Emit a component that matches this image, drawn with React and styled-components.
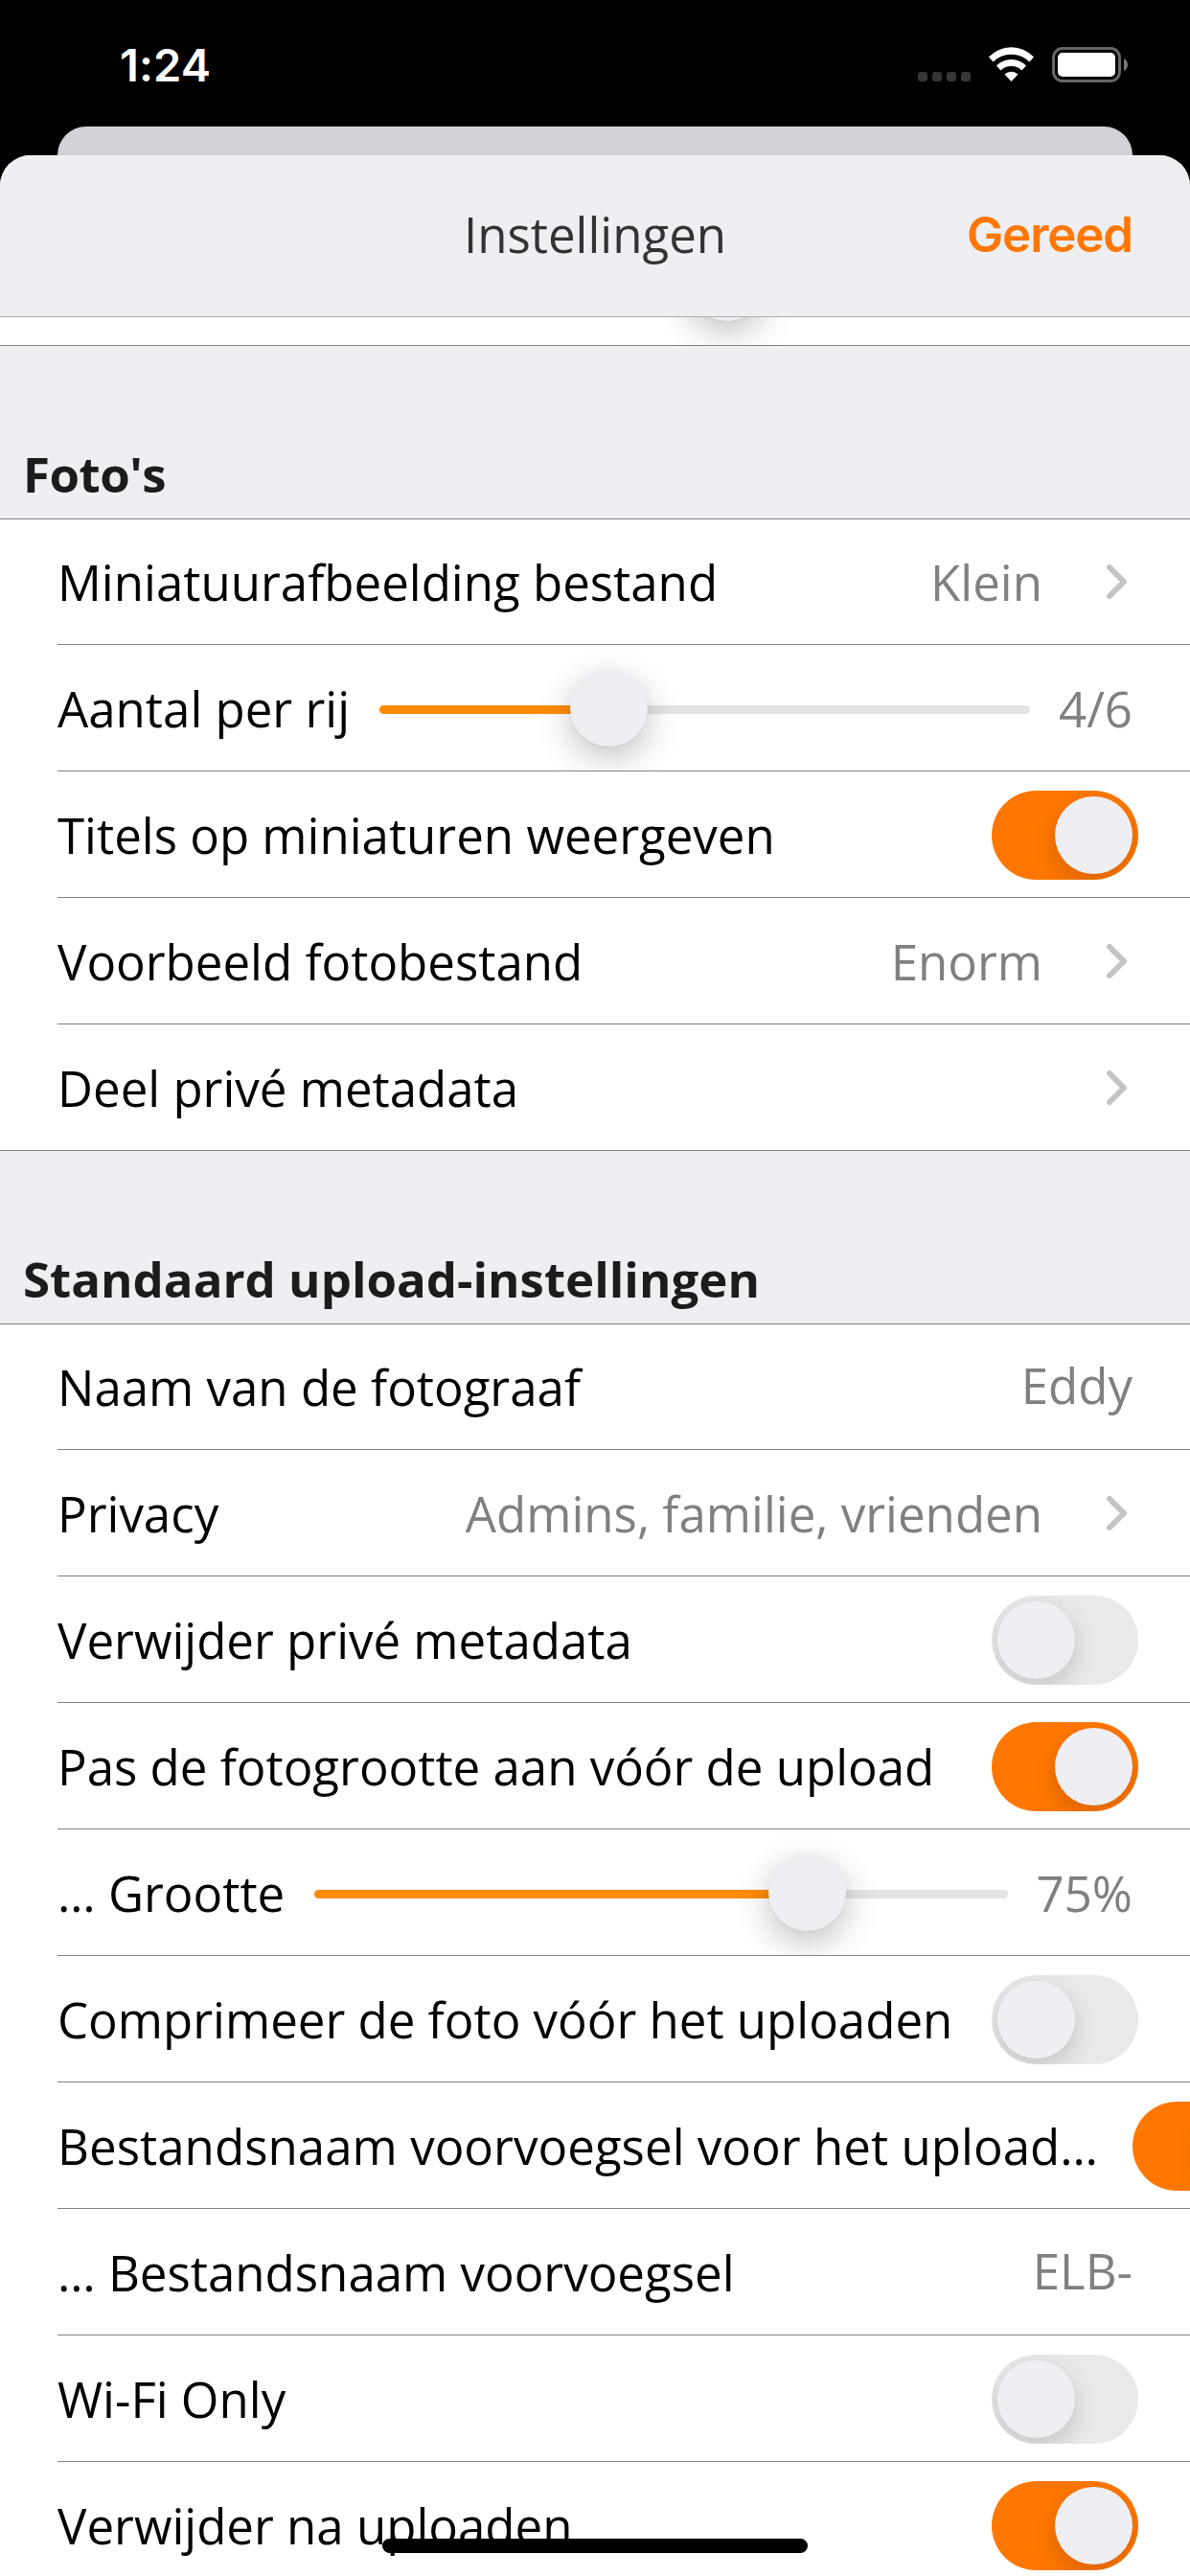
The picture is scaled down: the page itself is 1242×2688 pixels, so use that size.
import React from "react";
import styled, { createGlobalStyle } from "styled-components";

const GlobalStyle = createGlobalStyle`
  * { box-sizing: border-box; }
  body { margin: 0; background: #000; overflow: hidden; }
`;

const Screen = styled.div`
  position: relative;
  width: 1242px;
  height: 2688px;
  overflow: hidden;
  display: flex;
  flex-direction: column;
  background: #000;
  font-family: "Open Sans", "Noto Sans", sans-serif;
  font-size: 51px;
  line-height: 70px;
  white-space: nowrap;
`;

const StatusBar = styled.header`
  flex: none;
  height: 132px;
  padding: 0 64px 0 125px;
  display: flex;
  justify-content: space-between;
`;

const Clock = styled.time`
  margin-top: 33px;
  color: #fff;
  font: 600 47px/70px Inter, sans-serif;
  letter-spacing: 0.1px;
`;

const StatusIcons = styled.svg`
  width: 221px;
  height: 44px;
  margin-top: 49px;
`;

const BackCard = styled.div`
  flex: none;
  height: 30px;
  margin: 0 60px;
  border-radius: 30px 30px 0 0;
  background: #d2d1d6;
`;

const Sheet = styled.main`
  flex: none;
  height: 2526px;
  overflow: hidden;
  border-radius: 32px 32px 0 0;
  background: #efeef3;
`;

const NavBar = styled.nav`
  position: relative;
  z-index: 1;
  height: 169px;
  padding: 0 60px;
  display: grid;
  grid-template-columns: 1fr auto 1fr;
  align-items: start;
  background: #efeef3;
  border-bottom: 1px solid #adacb1;
`;

const Title = styled.h1`
  grid-column: 2;
  margin: 47px 0 0;
  font-size: 51px;
  font-weight: 400;
  color: #333335;
`;

const DoneButton = styled.button`
  justify-self: end;
  margin: 48px 0 0;
  padding: 0;
  border: 0;
  background: none;
  color: #ff7700;
  font: 600 51px/70px Inter, sans-serif;
  letter-spacing: -1.1px;
`;

const PeekRow = styled.div`
  height: 30px;
  padding-left: 718px;
  display: flex;
  align-items: flex-start;
  overflow: hidden;
  background: #fff;
  border-bottom: 1px solid #808080;
`;

const SectionTitle = styled.h2`
  height: 181px;
  margin: 0;
  padding: 98px 24px 0;
  border-bottom: 1px solid #808080;
  font-size: 51px;
  font-weight: 700;
  letter-spacing: ${(p) => p.$tracking || 0}px;
  color: #1c1c1e;
`;

const List = styled.ul`
  margin: 0;
  padding: 0;
  list-style: none;
  background: #fff;
  border-bottom: ${(p) => (p.$closed ? "1px solid #808080" : "0")};
`;

const Row = styled.li`
  height: 132px;
  margin-left: 60px;
  padding: 0 60px 0 0;
  display: flex;
  align-items: center;
  border-bottom: 1px solid #808080;
  overflow: hidden;

  &:first-child {
    height: 131px;
  }

  &:last-child {
    border-bottom-color: transparent;
    ${(p) => (p.$closed ? "height: 131px; border: 0;" : "")}
  }
`;

const Label = styled.span`
  flex: none;
  padding-top: 1px;
  color: #000;
  letter-spacing: ${(p) => p.$tracking || 0}px;

  ${Row}:first-child & {
    padding-top: 0;
  }
`;

const Value = styled.span`
  flex: none;
  margin-left: ${(p) => (p.$afterTrack ? "0" : "auto")};
  padding: ${(p) => (p.$field ? "0 0 3px" : "1px 0 0")};
  color: #808080;

  ${Row}:first-child & {
    padding: ${(p) => (p.$field ? "0 0 4px" : "0")};
  }
`;

const Chevron = styled.svg`
  flex: none;
  width: 21px;
  height: 36px;
  margin: 0 6px 0 ${(p) => (p.$alone ? "auto" : "67px")};
`;

const Track = styled.div`
  flex: 1;
  height: 9px;
  margin: 4px 30px 0 31px;
  display: flex;
  align-items: center;
  border-radius: 5px;
  background: #e4e4e6;
`;

const Fill = styled.div`
  height: 9px;
  flex: none;
  border-radius: 5px 0 0 5px;
  background: #ff8c00;
`;

const SliderThumb = styled.div`
  flex: none;
  width: 81px;
  height: 81px;
  margin-top: -4px;
  margin-left: -12px;
  border-radius: 50%;
  background: #efeef3;
  box-shadow: 0 1px 3px rgba(0, 0, 0, 0.05), 0 12px 36px rgba(0, 0, 0, 0.24);
`;

const PeekThumb = styled(SliderThumb)`
  margin: -77px 0 0;
`;

const Switch = styled.div`
  flex: none;
  width: 153px;
  height: 93px;
  margin: 2px -6px 0 ${(p) => (p.$pushed ? "36px" : "auto")};
  padding: 6px;
  display: flex;
  justify-content: ${(p) => (p.$on ? "flex-end" : "flex-start")};
  border-radius: 47px;
  overflow: hidden;
  background: ${(p) => (p.$on ? "#ff7700" : "#e9e9eb")};
`;

const Knob = styled.div`
  flex: none;
  width: 81px;
  height: 81px;
  border-radius: 50%;
  background: #efeef3;
  box-shadow: 0 9px 24px rgba(0, 0, 0, 0.16);
`;

const HomeIndicator = styled.div`
  position: absolute;
  left: 399px;
  bottom: 24px;
  width: 444px;
  height: 15px;
  border-radius: 8px;
  background: #000;
`;

function Slider({ ratio }) {
  return (
    <Track>
      <Fill style={{ width: `calc((100% - 81px) * ${ratio} + 12px)` }} />
      <SliderThumb />
    </Track>
  );
}

function ChevronIcon({ alone }) {
  return (
    <Chevron $alone={alone} viewBox="0 0 21 36" fill="none">
      <path d="M3 3L18 18L3 33" stroke="#c4c4c6" strokeWidth="6" strokeLinecap="round" strokeLinejoin="round" />
    </Chevron>
  );
}

function Setting({ item, closed }) {
  const { label, value, kind, on, ratio, pushed, tracking } = item;
  return (
    <Row $closed={closed}>
      <Label $tracking={tracking}>{label}</Label>
      {kind === "slider" && <Slider ratio={ratio} />}
      {value && (
        <Value $field={kind === "field"} $afterTrack={kind === "slider"}>
          {value}
        </Value>
      )}
      {kind === "link" && <ChevronIcon alone={!value} />}
      {kind === "switch" && (
        <Switch $on={on} $pushed={pushed}>
          <Knob />
        </Switch>
      )}
    </Row>
  );
}

const photos = [
  { label: "Miniatuurafbeelding bestand", kind: "link", value: "Klein" },
  { label: "Aantal per rij", kind: "slider", value: "4/6", ratio: 0.332 },
  { label: "Titels op miniaturen weergeven", kind: "switch", on: true },
  { label: "Voorbeeld fotobestand", kind: "link", value: "Enorm" },
  { label: "Deel privé metadata", kind: "link" },
];

const uploads = [
  { label: "Naam van de fotograaf", kind: "field", value: "Eddy" },
  { label: "Privacy", kind: "link", value: "Admins, familie, vrienden" },
  { label: "Verwijder privé metadata", kind: "switch" },
  { label: "Pas de fotogrootte aan vóór de upload", kind: "switch", on: true },
  { label: "… Grootte", kind: "slider", value: "75%", ratio: 0.737 },
  { label: "Comprimeer de foto vóór het uploaden", kind: "switch" },
  { label: "Bestandsnaam voorvoegsel voor het upload…", kind: "switch", on: true, pushed: true, tracking: 0.04 },
  { label: "… Bestandsnaam voorvoegsel", kind: "field", value: "ELB-" },
  { label: "Wi-Fi Only", kind: "switch" },
  { label: "Verwijder na uploaden", kind: "switch", on: true },
];

export default function App() {
  return (
    <Screen>
      <GlobalStyle />
      <StatusBar>
        <Clock>1:24</Clock>
        <StatusIcons viewBox="957 49 221 44" fill="none">
          <g fill="#363636">
            <rect x="958" y="75" width="10" height="10" rx="3" />
            <rect x="973" y="75" width="10" height="10" rx="3" />
            <rect x="988" y="75" width="10" height="10" rx="3" />
            <rect x="1003" y="75" width="10" height="10" rx="3" />
          </g>
          <g fill="#fff">
            <path d="M1032 59.500A32 32 0 0 1 1079 59.500L1074.500 64.500A27 27 0 0 0 1036.500 64.500Z" />
            <path d="M1040 68.500A22 22 0 0 1 1071 68.500L1066.500 73.500A16 16 0 0 0 1044.500 73.500Z" />
            <path d="M1048.500 77.500A10 10 0 0 1 1062.500 77.500L1055.500 85Z" />
          </g>
          <rect x="1099.500" y="50.500" width="69" height="34" rx="9.500" stroke="#666" strokeWidth="3" />
          <rect x="1104" y="55" width="60" height="25" rx="5" fill="#fff" />
          <path d="M1173 61C1178.300 63.500 1178.300 71.500 1173 74Z" fill="#777" />
        </StatusIcons>
      </StatusBar>
      <BackCard />
      <Sheet>
        <NavBar>
          <Title>Instellingen</Title>
          <DoneButton>Gereed</DoneButton>
        </NavBar>
        <PeekRow>
          <PeekThumb />
        </PeekRow>
        <SectionTitle $tracking={-0.5}>Foto's</SectionTitle>
        <List $closed>
          {photos.map((item, i) => (
            <Setting key={item.label} item={item} closed={i === photos.length - 1} />
          ))}
        </List>
        <SectionTitle>Standaard upload-instellingen</SectionTitle>
        <List>
          {uploads.map((item) => (
            <Setting key={item.label} item={item} />
          ))}
        </List>
      </Sheet>
      <HomeIndicator />
    </Screen>
  );
}
